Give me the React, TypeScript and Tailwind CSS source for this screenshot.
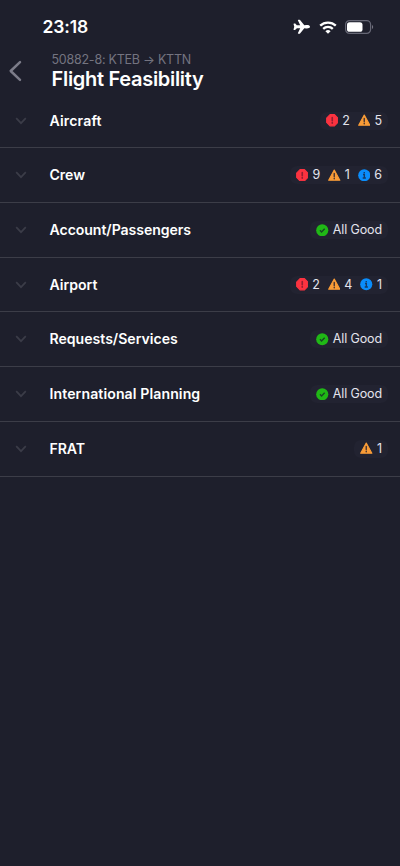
import React from "react";
import { IoAirplane } from "react-icons/io5";

type Kind = "error" | "warning" | "info" | "ok";
type Badge = { kind: Kind; label: string };
type Section = { title: string; tracking: string; badges: Badge[] };

const sections: Section[] = [
  { title: "Aircraft", tracking: "tracking-[0.140px]", badges: [{ kind: "error", label: "2" }, { kind: "warning", label: "5" }] },
  { title: "Crew", tracking: "tracking-[-0.050px]", badges: [{ kind: "error", label: "9" }, { kind: "warning", label: "1" }, { kind: "info", label: "6" }] },
  { title: "Account/Passengers", tracking: "tracking-[-0.060px]", badges: [{ kind: "ok", label: "All Good" }] },
  { title: "Airport", tracking: "tracking-[0px]", badges: [{ kind: "error", label: "2" }, { kind: "warning", label: "4" }, { kind: "info", label: "1" }] },
  { title: "Requests/Services", tracking: "tracking-[-0.010px]", badges: [{ kind: "ok", label: "All Good" }] },
  { title: "International Planning", tracking: "tracking-[0.100px]", badges: [{ kind: "ok", label: "All Good" }] },
  { title: "FRAT", tracking: "tracking-[-0.080px]", badges: [{ kind: "warning", label: "1" }] },
];

function StatusIcon({ kind }: { kind: Kind }) {
  return (
    <svg viewBox="0 0 13 13" className="size-[12.500px] shrink-0">
      {kind === "error" && (
        <>
          <path d="M4.200.7h4.600l3.500 3.500v4.600l-3.500 3.500H4.200L.7 8.800V4.200z" fill="#fb3340" stroke="#fb3340" strokeWidth="1.200" strokeLinejoin="round" />
          <path d="M6.500 3.600v3.300M6.500 8.900v.6" stroke="#951f32" strokeWidth="1.700" strokeLinecap="round" />
        </>
      )}
      {kind === "warning" && (
        <>
          <path d="M6.500 1.100 12.300 11.700H.7z" fill="#f99c37" stroke="#f99c37" strokeWidth="1.200" strokeLinejoin="round" />
          <path d="M6.500 4.600v3.300M6.500 9.700v.4" stroke="#4b3530" strokeWidth="1.500" strokeLinecap="round" />
        </>
      )}
      {kind === "info" && (
        <>
          <circle cx="6.500" cy="6.500" r="6.300" fill="#0a8dfb" />
          <path d="M6.500 3v1.300M5.200 5.700h1.400v3.600M4.900 9.400h3.300" fill="none" stroke="#153b66" strokeWidth="1.400" />
        </>
      )}
      {kind === "ok" && (
        <>
          <circle cx="6.500" cy="6.500" r="6.300" fill="#20b816" />
          <path d="m4.100 6.600 1.700 1.700 3.200-3.300" fill="none" stroke="#174725" strokeWidth="1.400" />
        </>
      )}
    </svg>
  );
}

function StatusBar() {
  return (
    <div className="flex h-[52px] items-center pt-[2px] pl-[42.500px] pr-[26px]">
      <span className="text-[17.500px] font-semibold leading-none tracking-[-0.100px] text-white">23:18</span>
      <div className="ml-auto flex items-center">
        <IoAirplane className="size-[17.500px] text-white" />
        <svg viewBox="0 0 18 13" className="ml-[8.500px] h-[13px] w-[18px]" fill="none" stroke="#fff" strokeWidth="2.300">
          <path d="M1.200 4.700a11.200 11.200 0 0 1 15.600 0" />
          <path d="M4.200 7.900a6.900 6.900 0 0 1 9.600 0" />
          <path d="M9 12.800 6.400 10.200a3.700 3.700 0 0 1 5.200 0z" fill="#fff" stroke="none" />
        </svg>
        <svg viewBox="0 0 29 14" className="ml-[8px] h-[14px] w-[29px]">
          <rect x=".6" y=".6" width="25" height="12.800" rx="4" fill="none" stroke="#666775" strokeWidth="1.200" />
          <rect x="2" y="2.200" width="15.500" height="9.600" rx="2.600" fill="#fff" />
          <path d="M27 5v4c1.600-.6 1.600-3.400 0-4" fill="#737380" />
        </svg>
      </div>
    </div>
  );
}

export default function App() {
  return (
    <main className="h-[866px] w-[400px] overflow-hidden bg-[#1e1f2c] font-['Inter',sans-serif] text-white">
      <StatusBar />
      <header className="flex h-[41.700px] items-start">
        <svg viewBox="0 0 14 22" className="mt-[8px] ml-[8px] h-[22px] w-[14px]" fill="none" stroke="#7c7c89" strokeWidth="2.500" strokeLinecap="round" strokeLinejoin="round">
          <path d="M12 2.200 2.700 11 12 19.800" />
        </svg>
        <div className="ml-[29.500px] whitespace-nowrap">
          <p className="text-[12.500px] leading-[16px] tracking-[-0.240px] text-[#747480]">50882-8: KTEB → KTTN</p>
          <h1 className="text-[20px] font-semibold leading-[23px] tracking-[-0.300px]">Flight Feasibility</h1>
        </div>
      </header>
      <div>
        {sections.map((section) => (
          <section key={section.title} className="flex h-[54.700px] items-center border-b border-[#3c3d48] pr-[12px] pl-[14.500px]">
            <svg viewBox="0 0 12 8" className="h-[8px] w-[12px]" fill="none" stroke="#3b3c48" strokeWidth="1.700">
              <path d="m1.200 1.200 4.800 5 4.800-5" />
            </svg>
            <h2 className={`ml-[23px] whitespace-nowrap text-[14.100px] font-[570] leading-[20px] ${section.tracking}`}>{section.title}</h2>
            <div className="ml-auto flex h-[18px] items-center gap-[8px] rounded-[7px] bg-[#222331] px-[6px]">
              {section.badges.map((badge) => (
                <span key={badge.kind} className={`flex items-center gap-[4px] whitespace-nowrap text-[12.500px] leading-[18px] text-[#e4e4ed] ${badge.kind === "ok" ? "tracking-[-0.120px]" : ""}`}>
                  <StatusIcon kind={badge.kind} />
                  {badge.label}
                </span>
              ))}
            </div>
          </section>
        ))}
      </div>
    </main>
  );
}
